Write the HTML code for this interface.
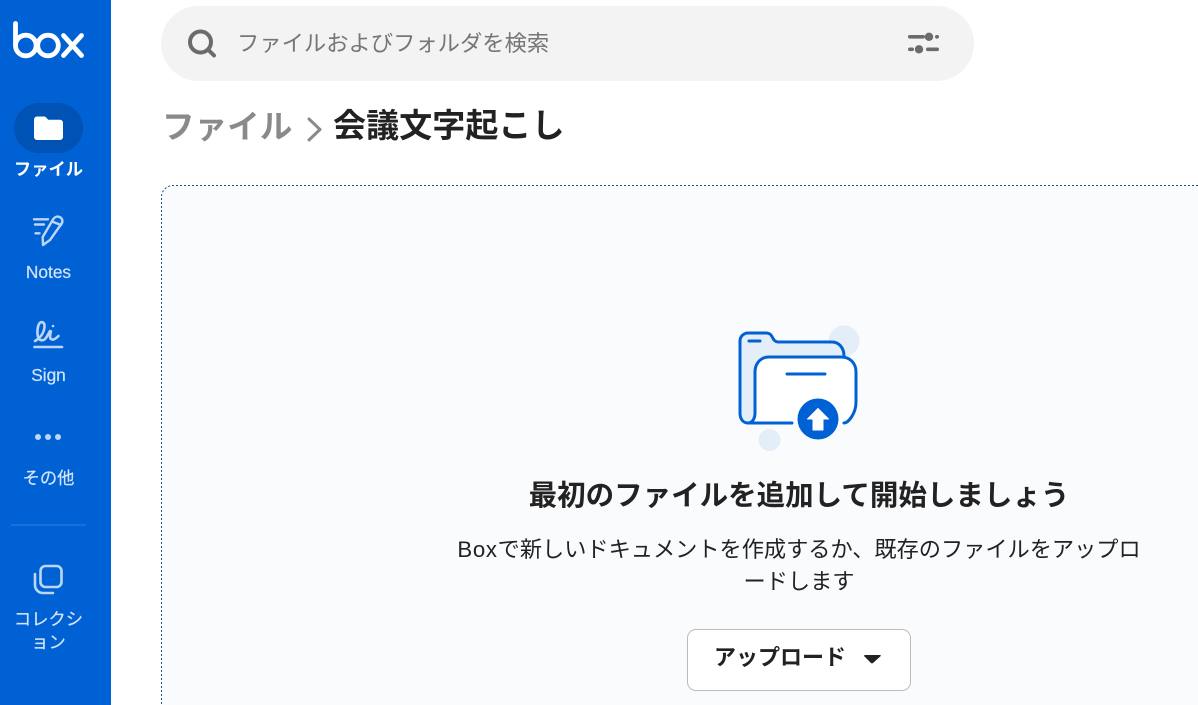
<!DOCTYPE html>
<html lang="ja"><head><meta charset="utf-8"><title>Box</title>
<style>
html,body{margin:0;padding:0;width:1198px;height:705px;overflow:hidden;background:#fff;font-family:"Liberation Sans","Noto Sans CJK JP",sans-serif;color:#222}
.abs{position:absolute}
.side{position:absolute;left:0;top:0;width:111px;height:705px;background:#0061d5}
.lbl{position:absolute;left:0;width:97px;text-align:center;font-size:17.3px;line-height:24px;color:#d3e4f8;white-space:nowrap;-webkit-text-stroke:.2px #d3e4f8}
</style></head><body>
<div class="side">
<svg class="abs" style="left:12px;top:20px" width="74" height="40" viewBox="0 0 74 40" fill="none" stroke="#fff" stroke-width="4.8" stroke-linecap="round" stroke-linejoin="round"><path d="M3.500 3.500V25"/><circle cx="13.800" cy="25.500" r="10.300"/><circle cx="36" cy="25.500" r="10.300"/><path d="M51.500 15.500L69.500 35.500M69.500 15.500L51.500 35.500"/></svg>
<div class="abs" style="left:14px;top:103px;width:69px;height:50px;border-radius:25px;background:#0053b5"></div>
<svg class="abs" style="left:33px;top:115px" width="30" height="26" viewBox="0 0 30 26"><path d="M1 4.500a3 3 0 0 1 3-3h7a3 3 0 0 1 2.200 1l2 2.200H27a3 3 0 0 1 3 3V22a3 3 0 0 1-3 3H4a3 3 0 0 1-3-3z" fill="#fff"/></svg>
<div class="lbl" style="top:157px;font-weight:700;color:#fff;-webkit-text-stroke:0">ファイル</div>
<svg class="abs" style="left:32px;top:214px" width="34" height="34" viewBox="0 0 34 34" fill="none" stroke="#bcd6f6" stroke-width="2.400" stroke-linecap="round" stroke-linejoin="round"><path d="M2 5.300H16M3 10.500H12M3.500 19.300H7.500"/><path d="M21 5.500C22.500 3 25 2 27.500 3S31 6.500 30 9L18 26 11 31 10.700 23z"/><path d="M20 7.500l9 3.500"/></svg>
<div class="lbl" style="top:260px">Notes</div>
<svg class="abs" style="left:32px;top:318px" width="32" height="32" viewBox="0 0 32 32" fill="none" stroke="#bcd6f6" stroke-width="2.600" stroke-linecap="round" stroke-linejoin="round"><path d="M2.500 29H30"/><path d="M3 23c5-3 9-8 9.500-14C13 4 9 2.500 7 6 5 10 5 17 6.500 20c1.500 3 5 3 7 .5 2-2.500 3-5 4.500-7.500M19 13.500c-1 3-1.500 6.500 0 7.500 2 1.500 5-.5 7.500-3"/><circle cx="21" cy="8" r="1.300" fill="#bcd6f6" stroke="none"/></svg>
<div class="lbl" style="top:363px">Sign</div>
<svg class="abs" style="left:34px;top:431px" width="28" height="12" viewBox="0 0 28 12" fill="#bcd6f6"><circle cx="4" cy="6" r="3"/><circle cx="14" cy="6" r="3"/><circle cx="24" cy="6" r="3"/></svg>
<div class="lbl" style="top:466px">その他</div>
<div class="abs" style="left:11px;top:524px;width:75px;height:2px;background:#1a6fd9"></div>
<svg class="abs" style="left:33px;top:564px" width="31" height="31" viewBox="0 0 31 31" fill="none" stroke="#bcd6f6" stroke-width="2.600" stroke-linecap="round"><rect x="7.500" y="2" width="21" height="21" rx="5"/><path d="M2 10V21a8 8 0 0 0 8 8H20"/></svg>
<div class="lbl" style="top:608px;line-height:23px;white-space:normal;left:11px;width:75px">コレクション</div>
</div>

<div class="abs" style="left:161px;top:6px;width:813px;height:75px;border-radius:38px;background:#f3f3f3"></div>
<svg class="abs" style="left:186px;top:28px" width="32" height="32" viewBox="0 0 32 32" fill="none" stroke="#6b6b6b" stroke-width="4" stroke-linecap="round"><circle cx="14.500" cy="14" r="10.500"/><path d="M22 21.500L28 27.500"/></svg>
<div class="abs" style="left:237px;top:29px;font-size:22.300px;line-height:30px;color:#767676;white-space:nowrap">ファイルおよびフォルダを検索</div>
<svg class="abs" style="left:906px;top:30px" width="36" height="26" viewBox="0 0 36 26" fill="#6b6b6b"><rect x="2" y="5" width="17" height="3.600" rx="1.800"/><circle cx="23" cy="6.800" r="4.200"/><rect x="29" y="5" width="4" height="3.600" rx="1.800"/><rect x="2" y="17.500" width="6" height="3.600" rx="1.800"/><circle cx="13" cy="19.300" r="4.200"/><rect x="20" y="17.500" width="13" height="3.600" rx="1.800"/></svg>

<div class="abs" style="left:162px;top:105px;font-size:32.600px;line-height:44px;font-weight:700;color:#8a8a8a;white-space:nowrap">ファイル</div>
<svg class="abs" style="left:304px;top:115px" width="20" height="28" viewBox="0 0 20 28" fill="none" stroke="#8a8a8a" stroke-width="3" stroke-linecap="round" stroke-linejoin="round"><path d="M5 4L16 14.500L5 25"/></svg>
<div class="abs" style="left:333px;top:105px;font-size:33.100px;line-height:44px;font-weight:700;color:#222;white-space:nowrap">会議文字起こし</div>

<svg class="abs" style="left:161px;top:185px" width="1037" height="520"><path d="M1037 .5H12A11.500 11.500 0 0 0 .5 12V520H1037Z" fill="#fafbfd"/><path d="M1037 .5H12A11.500 11.500 0 0 0 .5 12V520" fill="none" stroke="#1d4f8c" stroke-width="1" stroke-dasharray="2 2"/></svg>

<svg class="abs" style="left:720px;top:310px" width="160" height="150" viewBox="0 0 160 150">
<circle cx="124" cy="31" r="15.500" fill="#e3eef9"/><circle cx="49.500" cy="130" r="11" fill="#e3eef9"/>
<path d="M20 107V32a8 8 0 0 1 8-8h16a8 8 0 0 1 6 3l4 5a6 6 0 0 0 4 2h55a15 15 0 0 1 11 12v4H48a12 12 0 0 0-12 12V100c0 6-2 10-8 12z" fill="#e3eef9"/>
<path d="M30 113c4-1 5-6 5-12V60a13 13 0 0 1 13-13h73a15 15 0 0 1 15 15V92a21 21 0 0 1-20 21z" fill="#fff"/>
<g fill="none" stroke="#0061d5" stroke-width="3" stroke-linecap="round" stroke-linejoin="round">
<path d="M124 46c0-8-5-14-12-14H58c-2 0-3-1-4-2l-3-5c-1-1-3-2-5-2H28a8 8 0 0 0-8 8V103c0 6 3 10 8 10h44"/>
<path d="M28 113c4 0 7-4 7-10V62c0-9 6-15 14-15h72c9 0 15 6 15 15V92c0 12-8 21-12 21"/>
<path d="M29 31H40M67 64H105"/></g>
<circle cx="98" cy="109" r="20.500" fill="#0061d5"/>
<path d="M98 98.500L108.500 109H103V120H93V109H87.500z" fill="#fff" stroke="#fff" stroke-linejoin="round" stroke-width="1"/>
</svg>

<div class="abs" style="left:161px;top:477px;width:1276px;text-align:center;font-size:28.500px;line-height:38px;font-weight:700;color:#222;white-space:nowrap">最初のファイルを追加して開始しましょう</div>
<div class="abs" style="left:449px;top:534px;width:700px;text-align:center;font-size:22.200px;line-height:32px;color:#222"><span style="letter-spacing:.7px">Box</span>で新しいドキュメントを作成するか、既存のファイルをアップロ<br>ードします</div>

<div class="abs" style="left:687px;top:629px;width:222px;height:60px;border:1px solid #bcbcbc;border-radius:9px;background:#fff"></div>
<div class="abs" style="left:714px;top:643px;font-size:22px;line-height:30px;font-weight:700;color:#222;white-space:nowrap">アップロード</div>
<svg class="abs" style="left:863px;top:653px" width="20" height="12" viewBox="0 0 20 12"><path d="M1 3Q1 2 2.500 2H16.500Q18.500 2 17.500 3.200L10 10Q9 10.800 8 10Z" fill="#222"/></svg>
</body></html>
